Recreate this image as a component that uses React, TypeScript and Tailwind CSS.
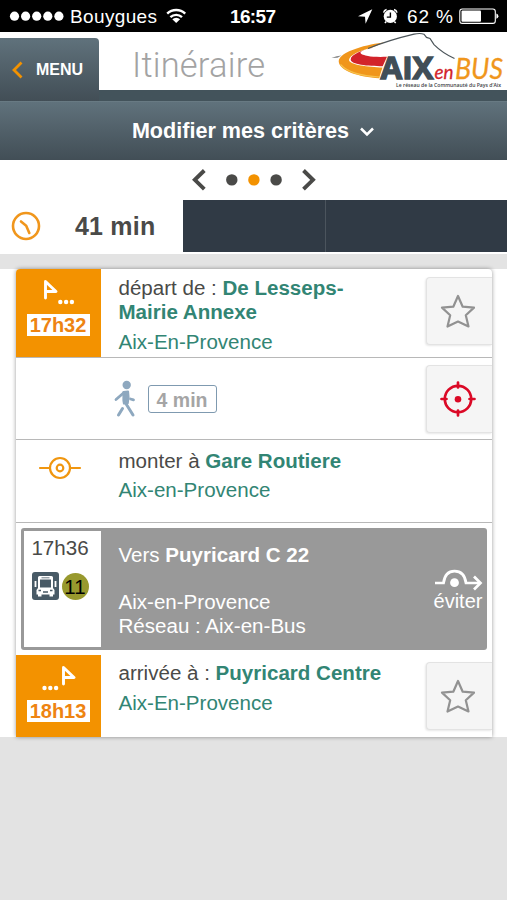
import type { ReactNode } from "react";

const StatusBar = () => (
  <div className="flex h-8 items-center bg-black text-white">
    <svg width="190" height="32" viewBox="0 0 190 32" fill="currentColor">
      {[14.5, 25.6, 36.7, 47.8, 58.9].map((cx) => (
        <circle key={cx} cx={cx} cy="16.2" r="4.6" />
      ))}
      <text x="70" y="23" fontSize="19" textLength="87" fontFamily="Liberation Sans, sans-serif">Bouygues</text>
      <g fill="none" stroke="currentColor" strokeWidth="2.4">
        <path d="M167.2 13.6a13 13 0 0 1 18 0" />
        <path d="M170.4 17.2a8.4 8.4 0 0 1 11.6 0" />
      </g>
      <path d="M176.2 23l-3.9-3.7a5.5 5.5 0 0 1 7.8 0z" />
    </svg>
    <svg width="317" height="32" viewBox="190 0 317 32" fill="currentColor">
      <text x="230" y="23" fontSize="19" fontWeight="bold" textLength="46" fontFamily="Liberation Sans, sans-serif">16:57</text>
      <path d="M372.3 9.3L358 16.2l7 .5.6 7z" />
      <circle cx="390.3" cy="16.4" r="6.6" />
      <path d="M383.6 12.6a4 4 0 0 1 3-3.2M394 9.4a4 4 0 0 1 3 3.2M386.3 21.5l-1.4 1.6M394.3 21.5l1.4 1.6" stroke="currentColor" strokeWidth="1.5" fill="none" />
      <path d="M390.4 12.5v4.6h-3.6" stroke="black" strokeWidth="1.4" fill="none" />
      <text x="407" y="23" fontSize="19" textLength="46" fontFamily="Liberation Sans, sans-serif">62 %</text>
      <rect x="459.8" y="9" width="35.5" height="14.4" rx="2.5" fill="none" stroke="currentColor" strokeWidth="1.1" />
      <rect x="461.5" y="10.6" width="19.5" height="11.2" rx="1" />
      <path d="M496.4 13.6q2 .8 2 2.6t-2 2.6z" />
    </svg>
  </div>
);

const Logo = () => (
  <svg width="177" height="58" viewBox="330 32 177 58" className="overflow-visible">
    <path d="M331.5 58q5-2 10-2.4l-4 2.2z" fill="#888" />
    {/* route */}
    <path d="M385 42.300c-16 1.700-46 9-46.300 19C339 71 359 77 379 78.300l3.500-10.800c-14-.5-33-2.500-33.500-7.500.5-5 11-9.500 22-12z" fill="#f0961c" />
    <path d="M340.500 64.500c6 7 21 11.500 39.500 12.500" stroke="#f7c14b" strokeWidth="1.200" fill="none" />
    <path d="M373.500 47.800c-11 2.200-22.800 6.700-22.800 11.700 0 5 17 6.700 32 6.700l4.300-9.400c-7 .2-15 .2-19-.8-3-.7-8-1.800-7.500-3.500.5-1.500 6-3.300 13-4.700z" fill="#d2232a" />
    <path d="M368 48.500C382 43 400 37.500 414 34.200c4-.9 8-.7 10 0l2.500 3.200 3.500 1 4 6.200c5 5 13 10.500 20.500 13.900" stroke="#4b5459" strokeWidth="1.200" fill="none" />
    <text x="380.500" y="79" fontSize="29.500" fontWeight="bold" fontFamily="Open Sans, sans-serif" textLength="53" lengthAdjust="spacingAndGlyphs" fill="#414e57" stroke="#414e57" strokeWidth="1.300">AIX</text>
    <text x="434.500" y="78.500" fontSize="19" fontStyle="italic" fontFamily="Lato, sans-serif" textLength="19" lengthAdjust="spacingAndGlyphs" fill="#d2232a" stroke="#d2232a" strokeWidth=".3">en</text>
    <text x="455" y="79" fontSize="28" fontStyle="italic" fontFamily="Lato, sans-serif" textLength="48" lengthAdjust="spacingAndGlyphs" fill="#f0961c" stroke="#f0961c" strokeWidth=".3">BUS</text>
    <text x="396" y="87" fontSize="5.800" fontWeight="600" fontFamily="Open Sans, sans-serif" textLength="105" lengthAdjust="spacingAndGlyphs" fill="#3d4246">Le réseau de la Communauté du Pays d’Aix</text>
  </svg>
);

const Header = () => (
  <header className="flex h-[69px] bg-linear-to-b from-white from-[84.5%] to-[#43535b] to-[84.5%]">
    <div className="flex w-[99px] bg-white pt-1.5">
      <button className="flex h-[63px] w-full items-center gap-[13px] rounded-tr-sm bg-linear-to-b from-[#60727c] to-[#424e56] pl-3 text-base font-bold text-white">
        <svg width="11" height="18" viewBox="0 0 11 18" fill="none" stroke="#f39200" strokeWidth="2.800">
          <path d="M9.500 1.500L2 9l7.500 7.500" />
        </svg>
        <span>MENU</span>
      </button>
    </div>
    <h1 className="ml-[33px] h-[58px] w-[198px] pt-[10px] font-[Roboto] text-[34.5px] leading-[46px] font-light tracking-[0.2px] text-[#a3a3a3]">Itinéraire</h1>
    <Logo />
  </header>
);

const Pager = () => (
  <nav className="flex h-10 items-center justify-center">
    <svg width="126" height="24" viewBox="190.500 168 126 24" fill="#4a4a48">
      <path d="M203.800 170.500l-9.500 9.300 9.500 9.300M303 170.500l9.500 9.300-9.500 9.300" fill="none" stroke="#4a4a48" strokeWidth="3.900" />
      <circle cx="231.300" cy="179.900" r="5.700" />
      <circle cx="253.400" cy="179.900" r="5.700" fill="#f39200" />
      <circle cx="275.600" cy="179.900" r="5.700" />
    </svg>
  </nav>
);

const Tabs = () => (
  <div className="flex h-[54px] bg-white pb-[2px]">
    <div className="flex w-[183px] items-center pb-px pl-[11px] text-[25px] font-bold text-[#4a4a48]">
      <svg width="30" height="30" viewBox="0 0 30 30" fill="none" stroke="#f0961c" strokeWidth="2.600" strokeLinecap="round">
        <circle cx="15" cy="15" r="13" />
        <path d="M10 10.500l5.200 4.200 3.100 7.300" />
      </svg>
      <span className="ml-[34px] tracking-[0.2px]">41 min</span>
    </div>
    <div className="w-[143px] border-r border-[#4b545d] bg-[#303a45]" />
    <div className="grow bg-[#303a45]" />
  </div>
);

const StarIcon = () => (
  <svg width="36" height="36" viewBox="0 0 36 36" fill="none" stroke="#929292" strokeWidth="2.200" strokeLinejoin="round">
    <path d="M18 3l4.700 10.700 11.300.9-8.200 7.700L28.500 33.500 18 28.500 7.500 33.500l2.700-11.200L2 14.600l11.300-.9z" />
  </svg>
);

const TargetIcon = () => (
  <svg width="36" height="36" viewBox="0 0 36 36" fill="none" stroke="#db0926" strokeWidth="2.700" strokeLinecap="round">
    <circle cx="18" cy="18" r="13.200" />
    <path d="M18 1.500v5M18 29.500v5M1.500 18h5M29.500 18h5" />
    <circle cx="18" cy="18.300" r="3.300" fill="#db0926" stroke="none" />
  </svg>
);

const SideButton = ({ children }: { children: ReactNode }) => (
  <button className="flex h-[68px] w-[66px] shrink-0 items-center justify-center rounded-l-sm border border-r-0 border-[#e3e3e3] bg-[#f5f5f5] pr-[3px] shadow-[-1px_1px_2px_#00000018]">
    {children}
  </button>
);

const FlagIcon = ({ arrival = false }: { arrival?: boolean }) => (
  <svg width="36" height="28" viewBox="0 0 36 28" fill="none" stroke="white" strokeWidth="2.900" strokeLinejoin="round" strokeLinecap="round">
    <path d={arrival ? "M23.500 20V3.500L34 13.500H24" : "M5.500 20V3.500L16 13.500H6"} />
    {(arrival ? [4.500, 10.300, 16.100] : [20.300, 26.100, 31.900]).map((cx) => (
      <circle key={cx} cx={cx} cy="24" r="2.200" fill="white" stroke="none" />
    ))}
  </svg>
);

const TimeBox = ({ time, arrival }: { time: string; arrival?: boolean }) => (
  <div className="flex w-[85px] shrink-0 flex-col items-center bg-[#f39200] pt-[9px]">
    <FlagIcon arrival={arrival} />
    <span className="mt-2 flex h-[22px] w-[63px] items-center justify-center bg-white text-[20px] leading-none font-bold text-[#ee8412]">{time}</span>
  </div>
);

const WalkIcon = () => (
  <svg width="22" height="38" viewBox="0 0 22 38" fill="none" stroke="#8ea8bf" strokeLinecap="round" strokeLinejoin="round">
    <circle cx="12.700" cy="5" r="4.200" fill="#8ea8bf" stroke="none" />
    <path d="M9.500 12l4.500-.5.500 6-.8 5.500-3.700.5-.5-3z" fill="#8ea8bf" strokeWidth="2.200" />
    <path d="M9.500 13L2 19.500" strokeWidth="2.800" />
    <path d="M16.500 19l3 .9" strokeWidth="2.800" />
    <path d="M11.500 23l7.500 12M8.500 28.500L4.500 35" strokeWidth="3" />
  </svg>
);

const StopIcon = () => (
  <svg width="44" height="24" viewBox="0 0 44 24" fill="none" stroke="#f0960f" strokeWidth="2.200" strokeLinecap="round">
    <circle cx="22" cy="12" r="10" />
    <circle cx="22" cy="12" r="3.300" />
    <path d="M2 12h10M32 12h10" />
  </svg>
);

const BusIcon = () => (
  <svg width="27" height="28" viewBox="0 0 27 28">
    <rect width="27" height="28" rx="3" fill="#485a66" />
    <path d="M6 5.500q0-1.500 1.500-1.500h12q1.500 0 1.500 1.500V16l1.500 2v4.500h-18V18L6 16z" fill="white" />
    <path d="M8 7.500h11V15.500H8z" fill="#485a66" />
    <path d="M9.500 5.800h8" stroke="#485a66" strokeWidth=".8" />
    <path d="M3.500 9v6M23.500 9v6" stroke="white" strokeWidth="1.800" />
    <path d="M6 21h3.500v3.500H6zM17.500 21H21v3.500h-3.500z" fill="white" />
    <path d="M6.500 18.500H9M18 18.500h2.500M11 20h5" stroke="#485a66" strokeWidth="1.300" />
  </svg>
);

const AvoidIcon = () => (
  <svg width="49" height="22" viewBox="0 0 49 22" fill="none" stroke="white" strokeWidth="2.700">
    <path d="M1 14h8.500C10.500 6.500 14 2.200 20.500 2.200S31 6.500 32 14h14" />
    <path d="M40 7.500l6.500 6.500-6.500 6.500" />
    <circle cx="20.500" cy="13.700" r="4.400" fill="white" stroke="none" />
  </svg>
);

const App = () => {
  return (
    <div className="min-h-[900px] w-[507px] overflow-hidden bg-[#e3e3e3] font-['Liberation_Sans',Arial,sans-serif] text-[20.55px] leading-6 text-[#4a4a48]">
      <StatusBar />
      <Header />
      <div className="flex h-[59px] items-center justify-center gap-[11px] border-t border-[#687a83] bg-linear-to-b from-[#60727c] to-[#424e56] pr-px text-[21.6px] font-bold text-white">
        <span>Modifier mes critères</span>
        <svg width="14" height="10" viewBox="0 0 14 10" fill="none" stroke="currentColor" strokeWidth="2.500" className="mt-0.5">
          <path d="M1 1.500l6 6 6-6" />
        </svg>
      </div>
      <div className="bg-white">
        <Pager />
        <Tabs />
      </div>

      <main className="mt-[15px] bg-white pr-[15.500px] pl-[15.500px]">
        <div className="overflow-hidden rounded-t-sm bg-white shadow-[0_0_4px_#00000066]">
          {/* Départ */}
          <section className="flex h-[89px] border-b border-[#b8b8b8]">
            <TimeBox time="17h32" />
            <div className="grow pt-[7px] pl-[18px]">
              <p>départ de : <b className="text-[#328574]">De Lesseps-<br />Mairie Annexe</b></p>
              <p className="mt-1.5 text-[#328574]">Aix-En-Provence</p>
            </div>
            <div className="pt-2"><SideButton><StarIcon /></SideButton></div>
          </section>

          {/* Marche */}
          <section className="flex h-[82px] items-center border-b border-[#b8b8b8]">
            <div className="flex grow items-center gap-3 pl-[98px]">
              <WalkIcon />
              <span className="flex h-[28px] w-[69px] items-center justify-center rounded-[3px] border border-[#7f9ab0] pt-0.5 text-[19.5px] font-bold text-[#a5a5a5]">4 min</span>
            </div>
            <SideButton><TargetIcon /></SideButton>
          </section>

          <section className="flex h-[83px] border-b border-[#b8b8b8]">
            <div className="w-[103px] pt-4 pl-[22px]"><StopIcon /></div>
            <div className="pt-[9px]">
              <p>monter à <b className="text-[#328574]">Gare Routiere</b></p>
              <p className="mt-[5px] text-[#328574]">Aix-en-Provence</p>
            </div>
          </section>

          {/* Trajet en bus */}
          <section className="h-[132px] pt-[5px] pr-[5px] pl-[5px]">
            <div className="flex h-[122px] rounded-[3px] bg-[#999999] text-white">
              <div className="my-[3px] ml-[3px] flex w-[77px] flex-col items-center bg-white pt-[5px] pr-1 text-[#4a4a48]">
                <span>17h36</span>
                <div className="mt-3 flex items-center gap-[3px]">
                  <BusIcon />
                  <span className="flex size-[27px] items-center justify-center rounded-full bg-[#98992e] pt-0.5 text-[20.5px] text-black">11</span>
                </div>
              </div>
              <div className="grow pt-[15px] pl-[18px]">
                <p>Vers <b>Puyricard C 22</b></p>
                <p className="mt-[23px]">Aix-en-Provence</p>
                <p>Réseau : Aix-en-Bus</p>
              </div>
              <div className="flex flex-col items-center pt-[41px] pr-1">
                <AvoidIcon />
                <span className="mt-[-2px] text-[20px]">éviter</span>
              </div>
            </div>
          </section>

          {/* Arrivée */}
          <section className="flex h-[82px]">
            <TimeBox time="18h13" arrival />
            <div className="grow pt-[6px] pl-[18px]">
              <p>arrivée à : <b className="text-[#328574]">Puyricard Centre</b></p>
              <p className="mt-1.5 text-[#328574]">Aix-En-Provence</p>
            </div>
            <div className="pt-[7px]"><SideButton><StarIcon /></SideButton></div>
          </section>
        </div>
      </main>
    </div>
  );
};

export default App;
